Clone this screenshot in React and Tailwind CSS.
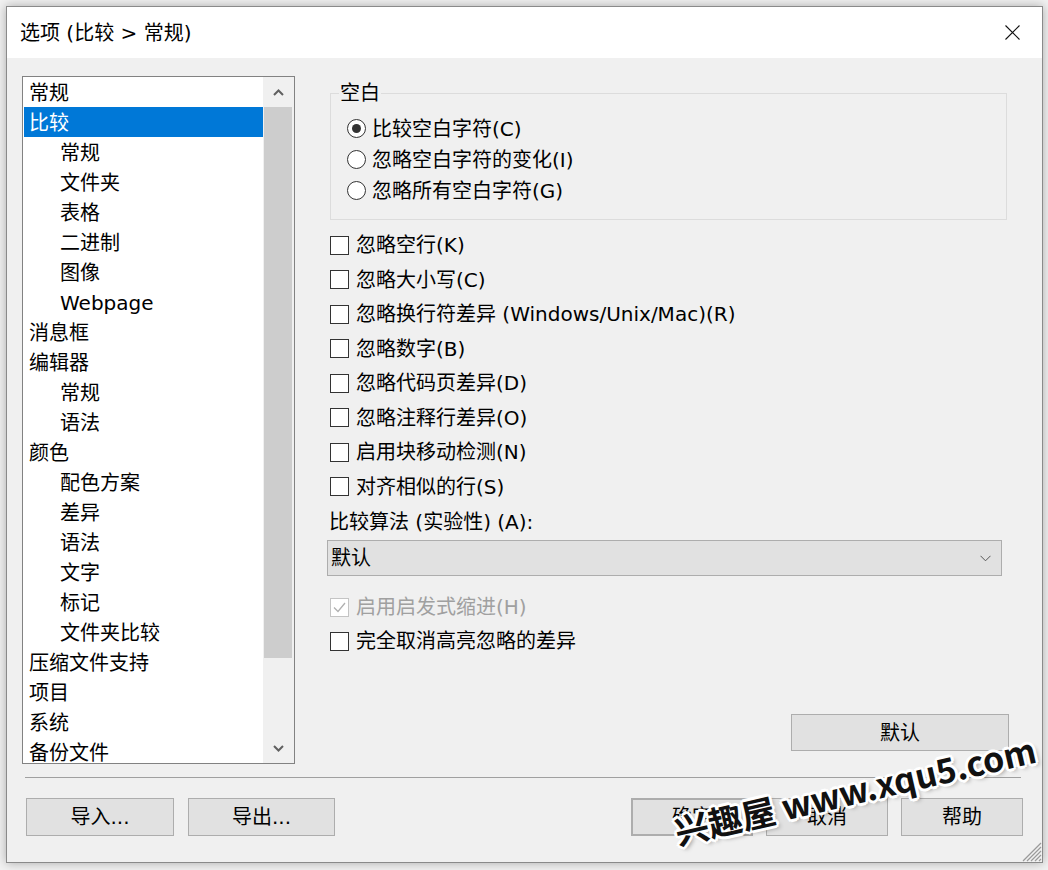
import React from 'react';

const tree = [
  { label: '常规', level: 0 },
  { label: '比较', level: 0, selected: true },
  { label: '常规', level: 1 },
  { label: '文件夹', level: 1 },
  { label: '表格', level: 1 },
  { label: '二进制', level: 1 },
  { label: '图像', level: 1 },
  { label: 'Webpage', level: 1 },
  { label: '消息框', level: 0 },
  { label: '编辑器', level: 0 },
  { label: '常规', level: 1 },
  { label: '语法', level: 1 },
  { label: '颜色', level: 0 },
  { label: '配色方案', level: 1 },
  { label: '差异', level: 1 },
  { label: '语法', level: 1 },
  { label: '文字', level: 1 },
  { label: '标记', level: 1 },
  { label: '文件夹比较', level: 1 },
  { label: '压缩文件支持', level: 0 },
  { label: '项目', level: 0 },
  { label: '系统', level: 0 },
  { label: '备份文件', level: 0 },
];

const radios = [
  { label: '比较空白字符(C)', checked: true },
  { label: '忽略空白字符的变化(I)' },
  { label: '忽略所有空白字符(G)' },
];

const checks = [
  '忽略空行(K)',
  '忽略大小写(C)',
  '忽略换行符差异 (Windows/Unix/Mac)(R)',
  '忽略数字(B)',
  '忽略代码页差异(D)',
  '忽略注释行差异(O)',
  '启用块移动检测(N)',
  '对齐相似的行(S)',
];

const Checkbox = ({ label, checked, disabled }) => (
  <div className="flex items-center h-[34px] pt-[2px]">
    <div
      className={`ml-[4px] w-[19px] h-[19px] border bg-white flex items-center justify-center ${
        disabled ? 'border-[#c4c4c4]' : 'border-[#333333]'
      }`}
    >
      {checked && (
        <svg width="15" height="15" viewBox="0 0 15 15">
          <path d="M2 7.5 L6 11.5 L13 3" fill="none" stroke="#b0b0b0" strokeWidth="1.3" />
        </svg>
      )}
    </div>
    <span className={`ml-[7px] leading-[24px] ${disabled ? 'text-[#a0a0a0]' : 'text-black'}`}>{label}</span>
  </div>
);

const Button = ({ children, className = '' }) => (
  <div
    className={`h-[38px] bg-[#e1e1e1] border border-[#adadad] flex items-center justify-center leading-[24px] ${className}`}
  >
    {children}
  </div>
);

const App = () => {
  return (
    <div className="relative w-[1048px] h-[870px] bg-[#f2f2f2] pt-[6px] pl-[6px] overflow-hidden font-['DejaVu_Sans','Noto_Sans_CJK_SC',sans-serif] text-[20px] text-black">
      <div className="relative w-[1037px] h-[857px] border border-[#8a8a8a] flex flex-col shadow-[0_0_10px_rgba(0,0,0,0.3)]">
        {/* title bar */}
        <div className="h-[51px] bg-white flex items-center justify-between pl-[13px] pr-[22px]">
          <span className="leading-[24px]">选项 (比较 &gt; 常规)</span>
          <svg width="15" height="15" viewBox="0 0 15 15">
            <path d="M0.5 0.5 L14.5 14.5 M14.5 0.5 L0.5 14.5" stroke="#111" strokeWidth="1.1" />
          </svg>
        </div>

        <div className="flex-1 bg-[#f0f0f0] pl-[15px] pt-[18px] flex flex-col">
          <div className="flex">
            {/* tree list */}
            <div className="w-[273px] h-[688px] border border-[#828282] bg-white flex">
              <div className="flex-1 pl-[1px] overflow-hidden">
                {tree.map((item, i) => (
                  <div
                    key={i}
                    className={`h-[30px] pt-[2px] flex items-center leading-[24px] whitespace-nowrap ${
                      item.level ? 'pl-[36px]' : 'pl-[5px]'
                    } ${item.selected ? 'bg-[#0078d7] text-white' : ''}`}
                  >
                    {item.label}
                  </div>
                ))}
              </div>
              <div className="w-[31px] bg-[#f0f0f0] flex flex-col">
                <div className="h-[30px] flex items-center justify-center">
                  <svg width="11" height="7" viewBox="0 0 11 7">
                    <path d="M1 6 L5.5 1.5 L10 6" fill="none" stroke="#606060" strokeWidth="2" />
                  </svg>
                </div>
                <div className="flex-1">
                  <div className="h-[551px] bg-[#cdcdcd] ml-[1px] mr-[2px]" />
                </div>
                <div className="h-[30px] flex items-center justify-center">
                  <svg width="11" height="7" viewBox="0 0 11 7">
                    <path d="M1 1 L5.5 5.5 L10 1" fill="none" stroke="#606060" strokeWidth="2" />
                  </svg>
                </div>
              </div>
            </div>

            {/* options */}
            <div className="ml-[31px] w-[683px] flex flex-col">
              <fieldset className="mt-[5px] ml-[4px] w-[677px] border border-[#dcdcdc] pt-[7px] pb-[14px]">
                <legend className="ml-[8px] px-[1px] leading-[24px]">空白</legend>
                <div className="pl-[16px]">
                  {radios.map((r, i) => (
                    <div key={i} className="h-[31px] pt-[2px] flex items-center">
                      <div className="w-[19px] h-[19px] rounded-full border border-[#333333] bg-white flex items-center justify-center">
                        {r.checked && <div className="w-[9px] h-[9px] rounded-full bg-[#333333]" />}
                      </div>
                      <span className="ml-[6px] leading-[24px]">{r.label}</span>
                    </div>
                  ))}
                </div>
              </fieldset>

              <div className="mt-[7px] flex flex-col">
                {checks.map((c, i) => (
                  <div key={i} className="h-[34.5px] pt-[2px] flex items-center">
                    <div className="ml-[4px] w-[19px] h-[19px] border border-[#333333] bg-white" />
                    <span className="ml-[7px] leading-[24px]">{c}</span>
                  </div>
                ))}
              </div>

              <div className="mt-[4px] h-[28px] pt-[2px] pl-[3px] flex items-center leading-[24px]">比较算法 (实验性) (A):</div>

              <div className="mt-[5px] ml-[1px] w-[675px] h-[36px] bg-[#e1e1e1] border border-[#adadad] flex items-center justify-between pl-[3px] pr-[10px]">
                <span className="leading-[24px]">默认</span>
                <svg width="11" height="7" viewBox="0 0 11 7">
                  <path d="M0.5 0.8 L5.5 5.8 L10.5 0.8" fill="none" stroke="#555" strokeWidth="1" />
                </svg>
              </div>

              <div className="mt-[13px]">
                <Checkbox label="启用启发式缩进(H)" checked disabled />
                <Checkbox label="完全取消高亮忽略的差异" />
              </div>

              <div className="mt-[57px] self-end w-[218px] h-[37px] bg-[#e1e1e1] border border-[#adadad] flex items-center justify-center leading-[24px]">
                默认
              </div>
            </div>
          </div>

          <div className="mt-[13px] ml-[3px] w-[996px] h-px bg-[#a0a0a0]" />

          <div className="mt-[20px] flex">
            <Button className="ml-[4px] w-[148px]">导入...</Button>
            <Button className="ml-[14px] w-[147px]">导出...</Button>
            <Button className="ml-[296px] w-[122px] border-2 border-[#0078d7]">确定</Button>
            <Button className="ml-[13px] w-[122px]">取消</Button>
            <Button className="ml-[13px] w-[122px]">帮助</Button>
          </div>
        </div>

        {/* resize grip */}
        <svg className="absolute right-0 bottom-0" width="23" height="23" viewBox="0 0 23 23">
          <path
            d="M22 4 L4 22 M22 8 L8 22 M22 12 L12 22 M22 16 L16 22 M22 20 L20 22"
            stroke="#9a9a9a"
            strokeWidth="1.2"
          />
        </svg>
      </div>

      {/* watermark */}
      <div className="absolute left-[855px] top-[790px] -translate-x-1/2 -translate-y-1/2 -rotate-[13deg] whitespace-nowrap font-bold font-['Noto_Sans_CJK_SC',sans-serif] text-[34px] leading-none text-[#111] [text-shadow:3px_0_0_#fff,-3px_0_0_#fff,0_3px_0_#fff,0_-3px_0_#fff,2px_2px_0_#fff,-2px_-2px_0_#fff,2px_-2px_0_#fff,-2px_2px_0_#fff,3px_3px_4px_rgba(0,0,0,0.35)]">
        兴趣屋 www.xqu5.com
      </div>
    </div>
  );
};

export default App;
